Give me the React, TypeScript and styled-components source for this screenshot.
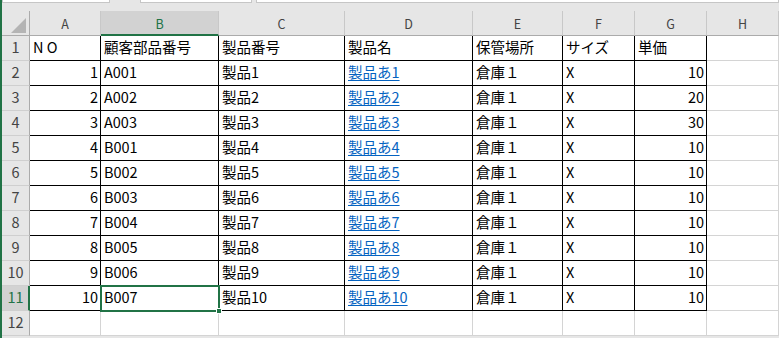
import styled, { createGlobalStyle } from "styled-components";

const GlobalStyle = createGlobalStyle`
    html, body {
        margin: 0;
        padding: 0;
        background: #ffffff;
    }
    body {
        font-family: "Noto Sans CJK JP", "Noto Sans", sans-serif;
        color: #000;
    }
`;

const GREEN = "#217346";
const GRID = "#d4d4d4";
const HEAD_BG = "#e6e6e6";
const HEAD_SEL = "#d2d2d2";
const HEAD_LINE = "#ababab";

const COLS = ["A", "B", "C", "D", "E", "F", "G", "H"];
const WIDTHS = [28, 71, 118, 126, 128, 90, 72, 72, 72];

const Window = styled.div`
    width: 777px;
    height: 338px;
    overflow: hidden;
    border-left: 2px solid ${GREEN};
    background: ${HEAD_BG};
`;

const TopBar = styled.div`
    height: 11px;
    display: flex;
    align-items: flex-start;
    background: ${HEAD_BG};
`;

const BarBox = styled.div<{ $width?: number; $gap?: number }>`
    height: 2px;
    width: ${p => (p.$width ? `${p.$width}px` : "auto")};
    flex: ${p => (p.$width ? "none" : "1")};
    margin-left: ${p => p.$gap ?? 0}px;
    background: #fff;
    border: 1px solid #c6c6c6;
    border-top: none;
`;

const Sheet = styled.div`
    display: grid;
    grid-template-columns: ${WIDTHS.map(w => `${w}px`).join(" ")};
    grid-auto-rows: 25px;
    background: #fff;
`;

const Corner = styled.div`
    background: ${HEAD_BG};
    border-right: 1px solid ${HEAD_LINE};
    border-bottom: 1px solid ${HEAD_LINE};
    display: flex;
    align-items: flex-end;
    justify-content: flex-end;
    padding: 0 3px 2px 0;
    box-sizing: border-box;
`;

const ColHeader = styled.div<{ $selected?: boolean }>`
    box-sizing: border-box;
    background: ${p => (p.$selected ? HEAD_SEL : HEAD_BG)};
    color: ${p => (p.$selected ? GREEN : "#444")};
    border-right: 1px solid #c8c8c8;
    border-bottom: ${p => (p.$selected ? `2px solid ${GREEN}` : `1px solid ${HEAD_LINE}`)};
    font-size: 12.5px;
    display: flex;
    align-items: center;
    justify-content: center;
    padding-top: ${p => (p.$selected ? 1 : 0)}px;
`;

const RowHeader = styled.div<{ $selected?: boolean }>`
    box-sizing: border-box;
    background: ${p => (p.$selected ? HEAD_SEL : HEAD_BG)};
    color: ${p => (p.$selected ? GREEN : "#444")};
    border-right: ${p => (p.$selected ? `2px solid ${GREEN}` : `1px solid ${HEAD_LINE}`)};
    border-bottom: 1px solid #cfcfcf;
    font-size: 14.5px;
    line-height: 22px;
    text-align: center;
    padding-left: ${p => (p.$selected ? 1 : 0)}px;
`;

const Cell = styled.div<{ $align?: "left" | "right"; $boxed?: boolean; $link?: boolean }>`
    position: relative;
    box-sizing: border-box;
    border-right: 1px solid ${p => (p.$boxed ? "#000" : GRID)};
    border-bottom: 1px solid ${p => (p.$boxed ? "#000" : GRID)};
    padding: 0 2px 0 3px;
    font-size: 14.5px;
    line-height: 22px;
    white-space: nowrap;
    text-align: ${p => p.$align ?? "left"};
    color: ${p => (p.$link ? "#0563c1" : "#000")};
    text-decoration: ${p => (p.$link ? "underline" : "none")};
    text-underline-offset: 2px;
`;

const Selection = styled.div`
    position: absolute;
    left: -1px;
    top: -1px;
    right: -2px;
    bottom: -2px;
    border: 2px solid ${GREEN};
    z-index: 2;
    pointer-events: none;
`;

const Handle = styled.div`
    position: absolute;
    right: -4px;
    bottom: -4px;
    width: 4px;
    height: 4px;
    background: ${GREEN};
    border: 1px solid #fff;
`;

const headers = ["N O", "顧客部品番号", "製品番号", "製品名", "保管場所", "サイズ", "単価"];
const codes = ["A001", "A002", "A003", "B001", "B002", "B003", "B004", "B005", "B006", "B007"];
const prices = [10, 20, 30, 10, 10, 10, 10, 10, 10, 10];

const rows: { value: string; align?: "left" | "right"; link?: boolean }[][] = [
    headers.map(h => ({ value: h })),
    ...codes.map((code, i) => [
        { value: String(i + 1), align: "right" as const },
        { value: code },
        { value: `製品${i + 1}` },
        { value: `製品あ${i + 1}`, link: true },
        { value: "倉庫１" },
        { value: "X" },
        { value: String(prices[i]), align: "right" as const },
    ]),
];

export default function App() {
    return (
        <>
            <GlobalStyle />
            <Window>
                <TopBar>
                    <BarBox $width={106} />
                    <BarBox $width={110} $gap={30} />
                    <BarBox $gap={4} />
                </TopBar>
                <Sheet>
                    <Corner>
                        <svg width="15" height="15" viewBox="0 0 15 15">
                            <polygon points="15,0 15,15 0,15" fill="#b4b4b4" />
                        </svg>
                    </Corner>
                    {COLS.map(c => (
                        <ColHeader key={c} $selected={c === "B"}>{c}</ColHeader>
                    ))}
                    {Array.from({ length: 12 }, (_, r) => {
                        const data = rows[r];
                        return [
                            <RowHeader key={`h${r}`} $selected={r === 10}>{r + 1}</RowHeader>,
                            ...COLS.map((c, ci) => {
                                const cell = data && ci < 7 ? data[ci] : undefined;
                                const selected = r === 10 && c === "B";
                                return (
                                    <Cell
                                        key={`${r}-${c}`}
                                        $boxed={!!cell}
                                        $align={cell?.align}
                                        $link={cell?.link}
                                    >
                                        {cell?.value}
                                        {selected && (
                                            <Selection>
                                                <Handle />
                                            </Selection>
                                        )}
                                    </Cell>
                                );
                            }),
                        ];
                    })}
                </Sheet>
            </Window>
        </>
    );
}
